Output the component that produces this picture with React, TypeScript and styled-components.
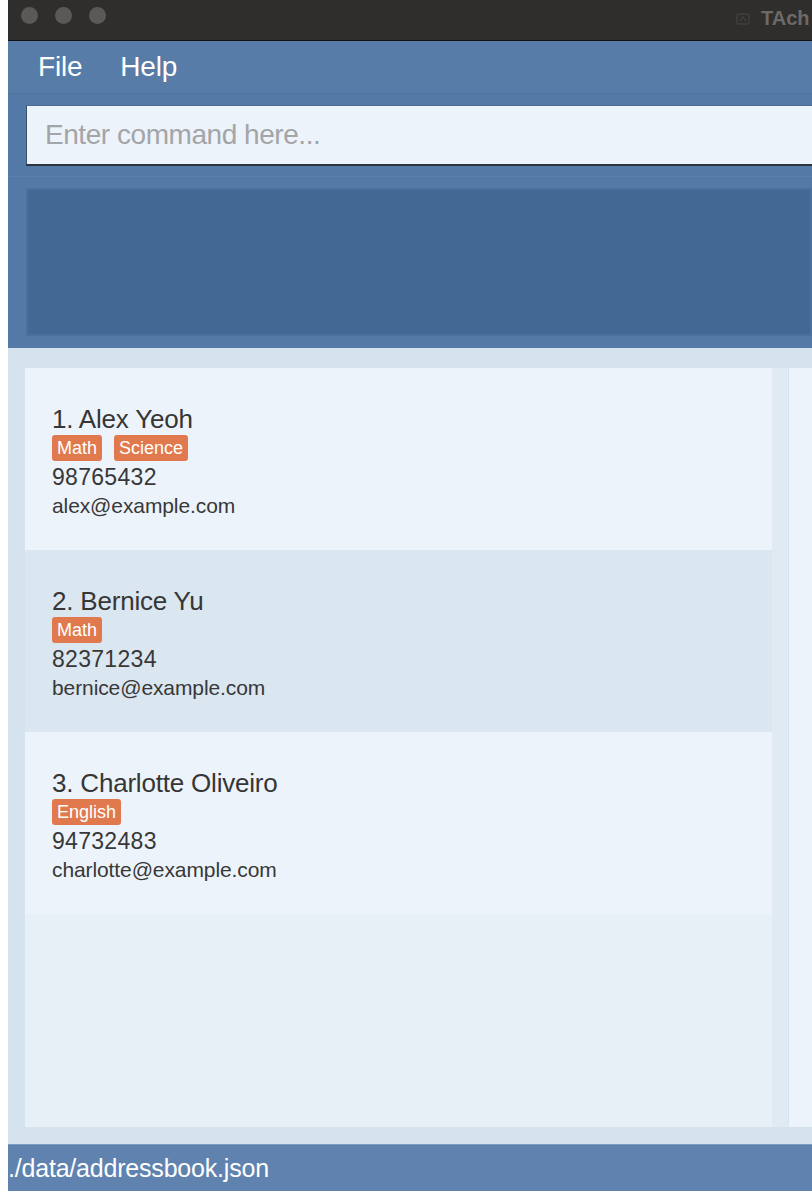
import React from "react";
import styled, { createGlobalStyle } from "styled-components";

const Global = createGlobalStyle`
  html, body { margin: 0; padding: 0; background: #ffffff; overflow: hidden; }
  body { font-family: "Liberation Sans", Arial, sans-serif; }
`;

const Page = styled.div`
  padding-left: 8px;
  width: 812px;
  height: 1194px;
  box-sizing: border-box;
  overflow: hidden;
`;

const Window = styled.div`
  width: 804px;
  height: 1191px;
  display: flex;
  flex-direction: column;
  overflow: hidden;
`;

const TitleBar = styled.div`
  height: 40px;
  background: #302e2c;
  border-bottom: 1px solid #121212;
  display: flex;
  align-items: center;
  padding-left: 13px;
  gap: 17px;
  position: relative;
  overflow: hidden;
`;

const Light = styled.span`
  width: 17px;
  height: 17px;
  border-radius: 50%;
  background: #5a5958;
  margin-top: -10px;
`;

const Title = styled.div`
  position: absolute;
  left: 727px;
  top: 7px;
  display: flex;
  align-items: center;
  gap: 10px;
  color: #6c6a68;
  font-weight: 700;
  font-size: 20px;
  white-space: nowrap;
`;

const MenuBar = styled.div`
  height: 52px;
  background: #577ca8;
  border-bottom: 1px solid #4e729e;
  display: flex;
  align-items: center;
  padding-left: 30px;
  gap: 38px;
`;

const MenuItem = styled.span`
  color: #ffffff;
  font-size: 28px;
  letter-spacing: -0.2px;
`;

const CommandArea = styled.div`
  height: 82px;
  box-sizing: border-box;
  background: #5379a6;
  padding: 11px 0 0 18px;
`;

const CommandInput = styled.div`
  height: 58px;
  background: #edf3fa;
  border-bottom: 2px solid #2c3440;
  border-left: 1px solid #3a4f6a;
  border-top: 1px solid #4a6a92;
  display: flex;
  align-items: center;
  padding-left: 18px;
  color: #a3a5a8;
  font-size: 28px;
  letter-spacing: -0.45px;
`;

const ResultArea = styled.div`
  height: 172px;
  box-sizing: border-box;
  background: #5479a6;
  border-top: 1px solid #5a80ad;
  padding: 11px 0 12px 18px;
`;

const ResultBox = styled.div`
  height: 100%;
  box-sizing: border-box;
  background: #426894;
  border: 2px solid #4a709d;
`;

const ListArea = styled.div`
  height: 796px;
  box-sizing: border-box;
  background: #d5e3ee;
  padding: 20px 0 17px 17px;
  display: flex;
`;

const ListPanel = styled.div`
  width: 747px;
  background: #e7eff7;
  display: flex;
  flex-direction: column;
`;

const ScrollStrip = styled.div`
  width: 16px;
  background: #e0eaf3;
  margin-right: 1px;
`;

const DetailPanel = styled.div`
  flex: 1;
  background: #edf3fa;
`;

const Card = styled.div<{ $alt: boolean }>`
  height: 182px;
  box-sizing: border-box;
  background: ${(p) => (p.$alt ? "#dae6f0" : "#edf3fa")};
  padding: 36px 0 0 27px;
  display: flex;
  flex-direction: column;
  color: #333333;
`;

const Name = styled.div`
  font-size: 26px;
  line-height: 30px;
  color: #363636;
  letter-spacing: -0.2px;
`;

const TagRow = styled.div`
  display: flex;
  gap: 12px;
  height: 27px;
  align-items: center;
`;

const Tag = styled.span`
  background: #e07a4e;
  color: #ffffff;
  font-size: 18px;
  line-height: 26px;
  padding: 0 5px;
  border-radius: 3px;
`;

const Phone = styled.div`
  margin-top: 2px;
  font-size: 23px;
  line-height: 28px;
  color: #383838;
  letter-spacing: 0.3px;
`;

const Email = styled.div`
  margin-top: 2px;
  font-size: 21px;
  line-height: 26px;
  color: #383838;
  letter-spacing: -0.1px;
`;

const StatusBar = styled.div`
  height: 47px;
  background: #5f83ae;
  border-top: 1px solid #7e9dc3;
  box-sizing: border-box;
  display: flex;
  align-items: center;
  color: #ffffff;
  font-size: 25px;
  letter-spacing: -0.2px;
`;

const persons = [
  { name: "1. Alex Yeoh", tags: ["Math", "Science"], phone: "98765432", email: "alex@example.com" },
  { name: "2. Bernice Yu", tags: ["Math"], phone: "82371234", email: "bernice@example.com" },
  { name: "3. Charlotte Oliveiro", tags: ["English"], phone: "94732483", email: "charlotte@example.com" },
];

export default function App() {
  return (
    <Page>
      <Global />
      <Window>
        <TitleBar>
          <Light />
          <Light />
          <Light />
          <Title>
            <svg width="16" height="16" viewBox="0 0 16 16">
              <rect x="2" y="3" width="12" height="10" rx="1.5" fill="none" stroke="#403e3c" strokeWidth="1.5" />
              <path d="M5 10 L8 6 L11 10" fill="none" stroke="#403e3c" strokeWidth="1.5" />
            </svg>
            <span>TAch</span>
          </Title>
        </TitleBar>
        <MenuBar>
          <MenuItem>File</MenuItem>
          <MenuItem>Help</MenuItem>
        </MenuBar>
        <CommandArea>
          <CommandInput>Enter command here...</CommandInput>
        </CommandArea>
        <ResultArea>
          <ResultBox />
        </ResultArea>
        <ListArea>
          <ListPanel>
            {persons.map((p, i) => (
              <Card key={p.name} $alt={i % 2 === 1}>
                <Name>{p.name}</Name>
                <TagRow>
                  {p.tags.map((t) => (
                    <Tag key={t}>{t}</Tag>
                  ))}
                </TagRow>
                <Phone>{p.phone}</Phone>
                <Email>{p.email}</Email>
              </Card>
            ))}
          </ListPanel>
          <ScrollStrip />
          <DetailPanel />
        </ListArea>
        <StatusBar>./data/addressbook.json</StatusBar>
      </Window>
    </Page>
  );
}
